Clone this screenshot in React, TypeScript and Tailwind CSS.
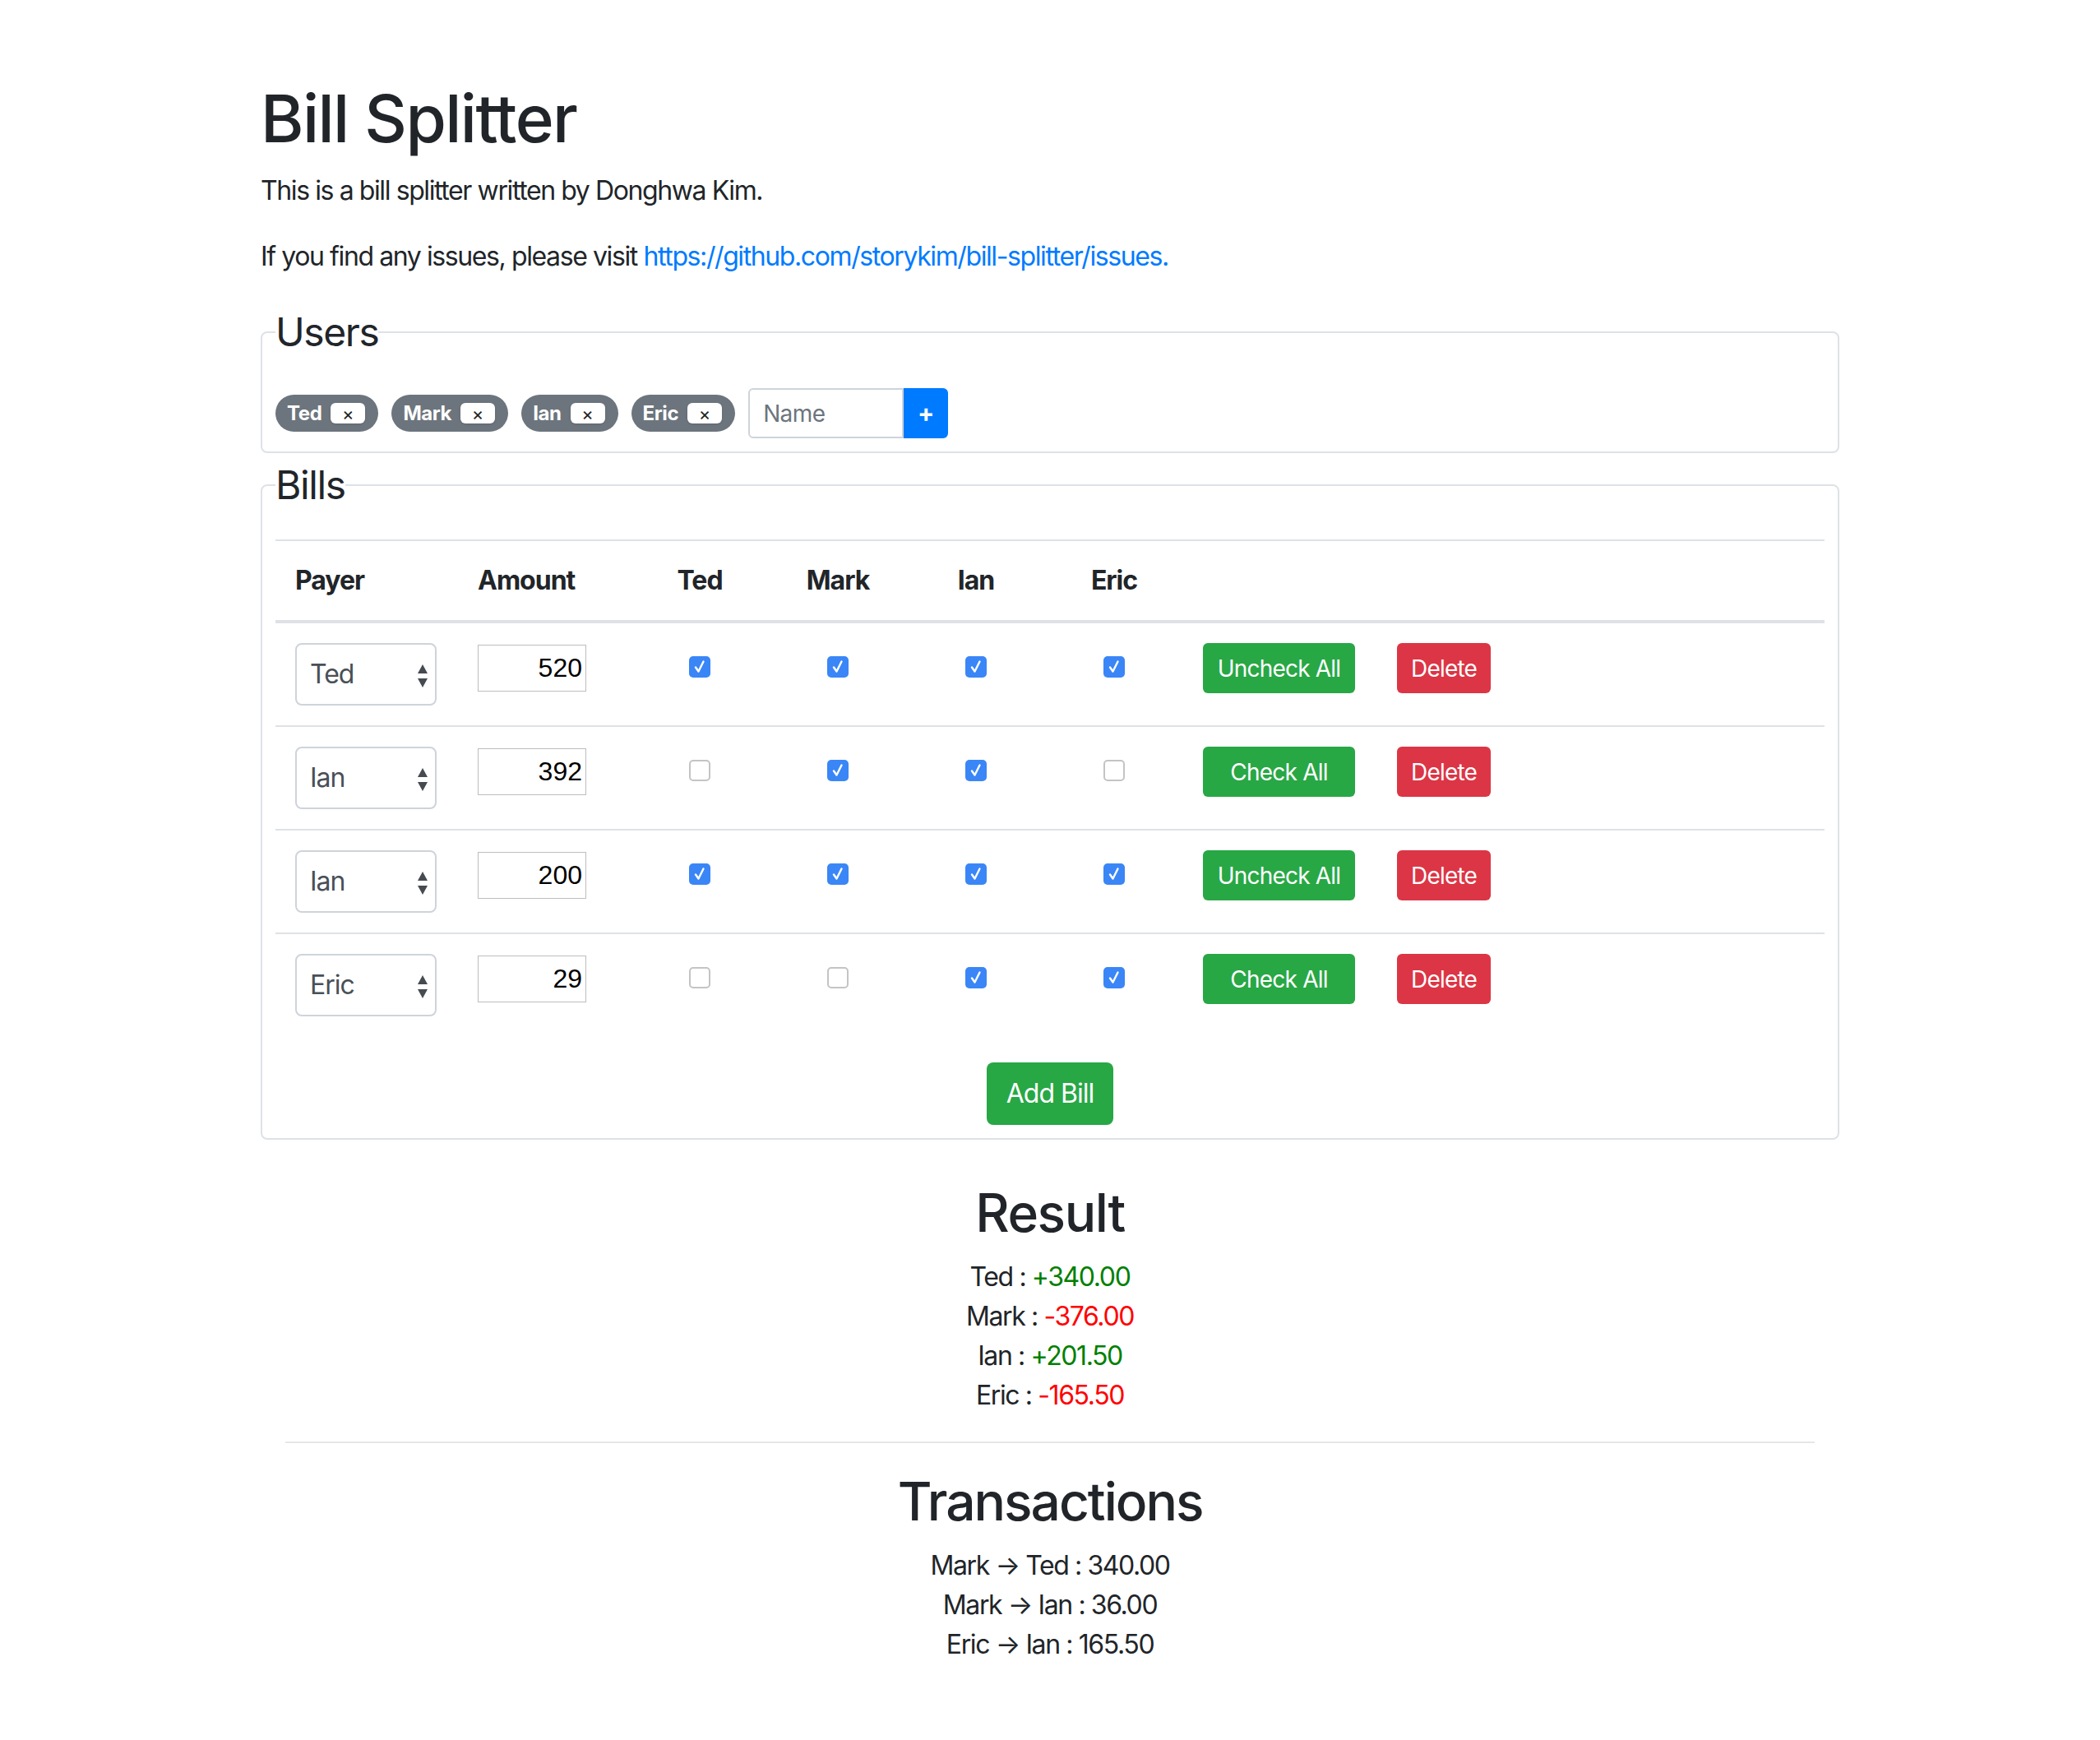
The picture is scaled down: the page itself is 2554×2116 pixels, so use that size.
import React from "react";

const users = ["Ted", "Mark", "Ian", "Eric"];

const bills = [
  { payer: "Ted", amount: "520", checks: [true, true, true, true] },
  { payer: "Ian", amount: "392", checks: [false, true, true, false] },
  { payer: "Ian", amount: "200", checks: [true, true, true, true] },
  { payer: "Eric", amount: "29", checks: [false, false, true, true] },
];

const results = [
  { name: "Ted", value: "+340.00", positive: true },
  { name: "Mark", value: "-376.00", positive: false },
  { name: "Ian", value: "+201.50", positive: true },
  { name: "Eric", value: "-165.50", positive: false },
];

const transactions = [
  { from: "Mark", to: "Ted", amount: "340.00" },
  { from: "Mark", to: "Ian", amount: "36.00" },
  { from: "Eric", to: "Ian", amount: "165.50" },
];

const cols = "grid grid-cols-[222px_210px_168px_168px_168px_168px_236px_1fr]";

function Checkbox({ checked }: { checked: boolean }) {
  if (!checked) {
    return <span className="block w-[26px] h-[26px] rounded-[5px] border-2 border-[#c4c4c4] bg-white" />;
  }
  return (
    <span className="flex items-center justify-center w-[26px] h-[26px] rounded-[5px] bg-[#3a86f6]">
      <svg width="26" height="26" viewBox="0 0 26 26" fill="none">
        <path d="M8 13.5 L11.5 18.5 L17.5 6.5" stroke="white" strokeWidth="2.4" strokeLinecap="round" strokeLinejoin="round" />
      </svg>
    </span>
  );
}

function PayerSelect({ value }: { value: string }) {
  return (
    <div className="relative flex items-center w-[172px] h-[76px] rounded-[8px] border-2 border-[#ced4da] bg-white pl-[16px] text-[32px] text-[#495057] tracking-[-1px]">
      <span>{value}</span>
      <svg className="absolute right-[8px] top-[23px]" width="14" height="30" viewBox="0 0 14 30">
        <path d="M7 1 L13 12 L1 12 Z" fill="#464b51" />
        <path d="M7 29 L13 18 L1 18 Z" fill="#464b51" />
      </svg>
    </div>
  );
}

export default function App() {
  return (
    <div className="min-h-[2116px] bg-white text-[#212529] font-['Inter',sans-serif]">
      <div className="w-[1920px] mx-auto pt-[96px]">
        <h1 className="text-[80px] leading-[96px] font-medium mb-[16px] tracking-[-1.6px]">Bill Splitter</h1>
        <p className="text-[32px] leading-[48px] mb-[32px] tracking-[-1.4px]">This is a bill splitter written by Donghwa Kim.</p>
        <p className="text-[32px] leading-[48px] mb-[32px] tracking-[-1.4px]">
          If you find any issues, please visit{" "}
          <a className="text-[#007bff]">https://github.com/storykim/bill-splitter/issues.</a>
        </p>

        {/* Users */}
        <fieldset className="border-2 border-[#dee2e6] rounded-[8px] px-[16px] pb-[16px]">
          <legend className="text-[48px] leading-[72px] tracking-[-1.4px]">Users</legend>
          <div className="flex items-center gap-[16px] pt-[32px]">
            {users.map((u) => (
              <span key={u} className="flex items-center h-[45px] rounded-full bg-[#6c757d] pl-[14px] pr-[16px] gap-[11px]">
                <span className="text-white font-bold text-[24px] tracking-[-0.4px]">{u}</span>
                <span className="flex items-center justify-center w-[42px] h-[25px] rounded-[6px] bg-white shadow-sm text-[22px] leading-none text-[#222]">×</span>
              </span>
            ))}
            <div className="flex">
              <input
                placeholder="Name"
                className="w-[189px] h-[61px] border-2 border-[#ced4da] rounded-l-[6px] pl-[16px] text-[28px] tracking-[-0.6px] placeholder:text-[#6c757d] outline-none"
              />
              <button className="w-[54px] h-[61px] rounded-r-[6px] bg-[#007bff] text-white text-[30px] font-bold">+</button>
            </div>
          </div>
        </fieldset>

        {/* Bills */}
        <fieldset className="mt-[3px] border-2 border-[#dee2e6] rounded-[8px] px-[16px] pb-[16px]">
          <legend className="text-[48px] leading-[72px] tracking-[-1.4px]">Bills</legend>
          <div className="pt-[30px]">
            <div className={`${cols} border-t-2 border-b-4 border-[#dee2e6] text-[32px] leading-[48px] font-bold tracking-[-1px]`}>
              <div className="p-[24px]">Payer</div>
              <div className="p-[24px]">Amount</div>
              {users.map((u) => (
                <div key={u} className="p-[24px] text-center">{u}</div>
              ))}
              <div />
              <div />
            </div>
            {bills.map((b, i) => {
              const all = b.checks.every(Boolean);
              return (
                <div key={i} className={`${cols} ${i > 0 ? "border-t-2 border-[#dee2e6]" : ""}`}>
                  <div className="p-[24px]">
                    <PayerSelect value={b.payer} />
                  </div>
                  <div className="p-[24px]">
                    <input
                      readOnly
                      value={b.amount}
                      className="mt-[2px] w-[132px] h-[57px] border border-[#bdbdbd] text-right pr-[4px] text-[32px] text-black font-['Liberation_Sans',sans-serif] outline-none"
                    />
                  </div>
                  {b.checks.map((c, j) => (
                    <div key={j} className="p-[24px] pt-[40px] flex justify-center">
                      <Checkbox checked={c} />
                    </div>
                  ))}
                  <div className="p-[24px]">
                    <button className="w-[185px] h-[61px] rounded-[6px] bg-[#28a745] text-white text-[28px] tracking-[-0.8px]">
                      {all ? "Uncheck All" : "Check All"}
                    </button>
                  </div>
                  <div className="p-[24px] pl-[24px]">
                    <button className="w-[114px] h-[61px] rounded-[6px] bg-[#dc3545] text-white text-[28px] tracking-[-0.8px]">Delete</button>
                  </div>
                </div>
              );
            })}
          </div>
          <div className="flex justify-center mt-[32px]">
            <button className="w-[154px] h-[76px] rounded-[8px] bg-[#28a745] text-white text-[32px] tracking-[-1px]">Add Bill</button>
          </div>
        </fieldset>

        {/* Result */}
        <div className="mt-[50px] px-[30px] text-center">
          <h2 className="text-[64px] leading-[77px] font-medium mb-[16px] tracking-[-1.4px]">Result</h2>
          {results.map((r) => (
            <div key={r.name} className="text-[32px] leading-[48px] tracking-[-1.4px]">
              {r.name} : <span className={r.positive ? "text-[#008000]" : "text-[#ff0000]"}>{r.value}</span>
            </div>
          ))}
          <hr className="my-[32px] border-t-2 border-[#e6e6e6]" />
          <h2 className="text-[64px] leading-[77px] font-medium mb-[16px] tracking-[-2px]">Transactions</h2>
          {transactions.map((t, i) => (
            <div key={i} className="text-[32px] leading-[48px] tracking-[-1.4px]">
              {t.from} → {t.to} : {t.amount}
            </div>
          ))}
        </div>
      </div>
    </div>
  );
}
